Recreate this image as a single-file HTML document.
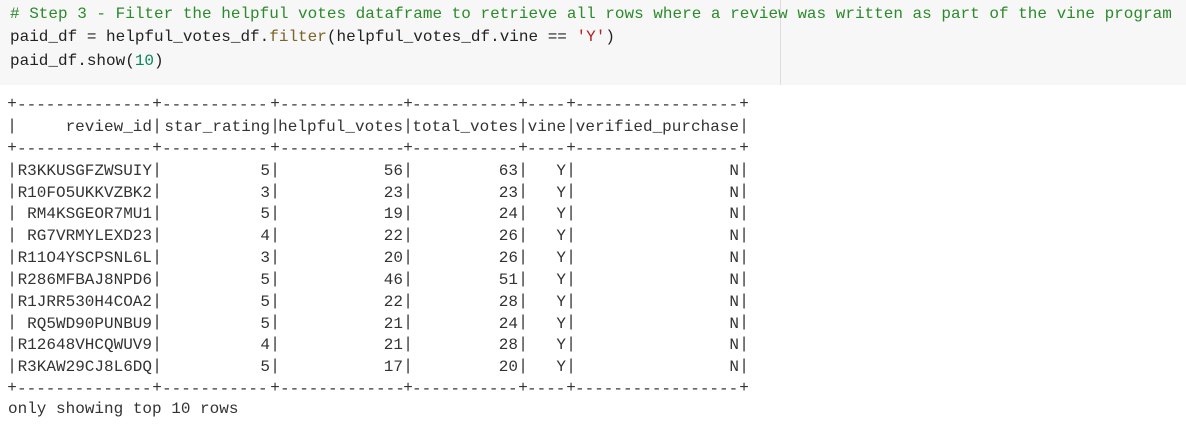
<!DOCTYPE html>
<html><head><meta charset="utf-8"><style>
body{margin:0;width:1186px;height:432px;background:#fff;position:relative;overflow:hidden;font-family:"Liberation Mono","DejaVu Sans Mono",monospace;font-size:16px;color:#333}
.code{position:absolute;left:0;top:0;width:1186px;height:85px;background:#f7f7f7}
.vl{position:absolute;left:780px;top:0;width:1px;height:85px;background:#ddd}
.cl{position:absolute;left:10px;white-space:pre;color:#222;line-height:20px}
.cm{color:#2c8a2c}.fn{color:#7a6428}.nm{color:#098658}.st{color:#b22222}
.col{position:absolute;top:94px;width:10px;text-align:center;white-space:pre;line-height:21.85px}
.r{position:absolute;left:0;width:1186px;height:22px;line-height:22px}
.r b{font-weight:normal;position:absolute;top:0;white-space:pre;text-align:right;direction:rtl}
.d b{text-align:left;direction:ltr;overflow:hidden}
.c1{left:17px;width:135px}.c2{left:162px;width:108px}.c3{left:280px;width:123px}.c4{left:412px;width:106px}.c5{left:527px;width:39px}.c6{left:575px;width:164px}
</style></head><body>
<div class="code"></div><div class="vl"></div>
<div class="cl" style="top:4px"><span class="cm"># Step 3 - Filter the helpful votes dataframe to retrieve all rows where a review was written as part of the vine program</span></div>
<div class="cl" style="top:27px">paid_df = helpful_votes_df.<span class="fn">filter</span>(helpful_votes_df.vine == <span class="st">'Y'</span>)</div>
<div class="cl" style="top:51px">paid_df.show(<span class="nm">10</span>)</div>

<div class="col" style="left:7px">+
|
+
|
|
|
|
|
|
|
|
|
|
+</div>
<div class="col" style="left:152px">+
|
+
|
|
|
|
|
|
|
|
|
|
+</div>
<div class="col" style="left:270px">+
|
+
|
|
|
|
|
|
|
|
|
|
+</div>
<div class="col" style="left:403px">+
|
+
|
|
|
|
|
|
|
|
|
|
+</div>
<div class="col" style="left:518px">+
|
+
|
|
|
|
|
|
|
|
|
|
+</div>
<div class="col" style="left:566px">+
|
+
|
|
|
|
|
|
|
|
|
|
+</div>
<div class="col" style="left:739px">+
|
+
|
|
|
|
|
|
|
|
|
|
+</div>

<div class="r d" style="top:94px"><b class="c1">------------------</b><b class="c2">--------------</b><b class="c3">----------------</b><b class="c4">--------------</b><b class="c5">----</b><b class="c6">--------------------</b></div>
<div class="r" style="top:116px"><b class="c1">review_id</b><b class="c2">star_rating</b><b class="c3">helpful_votes</b><b class="c4">total_votes</b><b class="c5">vine</b><b class="c6">verified_purchase</b></div>
<div class="r d" style="top:138px"><b class="c1">------------------</b><b class="c2">--------------</b><b class="c3">----------------</b><b class="c4">--------------</b><b class="c5">----</b><b class="c6">--------------------</b></div>
<div class="r" style="top:160px"><b class="c1">R3KKUSGFZWSUIY</b><b class="c2">5</b><b class="c3">56</b><b class="c4">63</b><b class="c5">Y</b><b class="c6">N</b></div>
<div class="r" style="top:182px"><b class="c1">R10FO5UKKVZBK2</b><b class="c2">3</b><b class="c3">23</b><b class="c4">23</b><b class="c5">Y</b><b class="c6">N</b></div>
<div class="r" style="top:203px"><b class="c1">RM4KSGEOR7MU1</b><b class="c2">5</b><b class="c3">19</b><b class="c4">24</b><b class="c5">Y</b><b class="c6">N</b></div>
<div class="r" style="top:225px"><b class="c1">RG7VRMYLEXD23</b><b class="c2">4</b><b class="c3">22</b><b class="c4">26</b><b class="c5">Y</b><b class="c6">N</b></div>
<div class="r" style="top:247px"><b class="c1">R11O4YSCPSNL6L</b><b class="c2">3</b><b class="c3">20</b><b class="c4">26</b><b class="c5">Y</b><b class="c6">N</b></div>
<div class="r" style="top:269px"><b class="c1">R286MFBAJ8NPD6</b><b class="c2">5</b><b class="c3">46</b><b class="c4">51</b><b class="c5">Y</b><b class="c6">N</b></div>
<div class="r" style="top:291px"><b class="c1">R1JRR530H4COA2</b><b class="c2">5</b><b class="c3">22</b><b class="c4">28</b><b class="c5">Y</b><b class="c6">N</b></div>
<div class="r" style="top:313px"><b class="c1">RQ5WD90PUNBU9</b><b class="c2">5</b><b class="c3">21</b><b class="c4">24</b><b class="c5">Y</b><b class="c6">N</b></div>
<div class="r" style="top:334px"><b class="c1">R12648VHCQWUV9</b><b class="c2">4</b><b class="c3">21</b><b class="c4">28</b><b class="c5">Y</b><b class="c6">N</b></div>
<div class="r" style="top:356px"><b class="c1">R3KAW29CJ8L6DQ</b><b class="c2">5</b><b class="c3">17</b><b class="c4">20</b><b class="c5">Y</b><b class="c6">N</b></div>
<div class="r d" style="top:378px"><b class="c1">------------------</b><b class="c2">--------------</b><b class="c3">----------------</b><b class="c4">--------------</b><b class="c5">----</b><b class="c6">--------------------</b></div>
<div class="r" style="top:398px;left:8px">only showing top 10 rows</div>
</body></html>
